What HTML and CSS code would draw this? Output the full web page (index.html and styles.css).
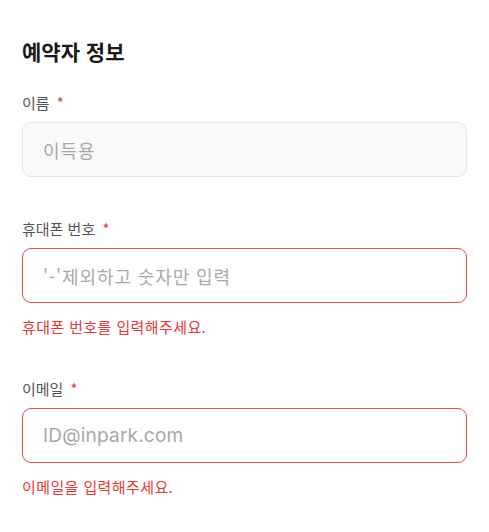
FILE: index.html
```html
<!DOCTYPE html>
<html lang="ko">
<head>
<meta charset="utf-8">
<link rel="stylesheet" href="styles.css">
</head>
<body>
<section class="form">
  <h2 class="title">예약자 정보</h2>
  <div class="field">
    <label class="label">이름 <span class="req">*</span></label>
    <div class="input disabled"><span class="ph">이득용</span></div>
  </div>
  <div class="field">
    <label class="label">휴대폰 번호 <span class="req">*</span></label>
    <div class="input error"><span class="ph">'-'제외하고 숫자만 입력</span></div>
    <p class="msg">휴대폰 번호를 입력해주세요.</p>
  </div>
  <div class="field">
    <label class="label">이메일 <span class="req">*</span></label>
    <div class="input error"><span class="ph latin">ID@inpark.com</span></div>
    <p class="msg">이메일을 입력해주세요.</p>
  </div>
</section>
</body>
</html>
```
FILE: styles.css
```css
* { box-sizing: border-box; }
html, body { margin: 0; padding: 0; background: #fff; }
body {
  font-family: "Noto Sans CJK KR", "Noto Sans", sans-serif;
  color: #222;
}
.form {
  padding: 37px 22px 0 22px;
  display: flex;
  flex-direction: column;
}
.title {
  margin: 0;
  font-size: 21px;
  line-height: 28px;
  font-weight: 700;
  color: #1a1a1a;
}
.field {
  display: flex;
  flex-direction: column;
  margin-top: 42px;
}
.title + .field { margin-top: 28px; }
.label {
  font-size: 15px;
  line-height: 20px;
  color: #555;
}
.req { color: #e53935; margin-left: 3px; }
.input {
  margin-top: 9px;
  height: 55px;
  width: 445px;
  border: 1px solid #e6e6e6;
  border-radius: 9px;
  display: flex;
  align-items: center;
  padding: 0 20px;
}
.input.disabled { background: #f9f9f9; }
.input.error { border: 1.5px solid #e84c4c; }
.ph {
  font-size: 18px;
  letter-spacing: 0.9px;
  color: #a8a8a8;
}
.ph.latin {
  font-family: "Inter", "Noto Sans CJK KR", sans-serif;
  font-size: 19px;
  letter-spacing: 0.2px;
}
.msg {
  margin: 14px 0 0 0;
  font-size: 15px;
  letter-spacing: 0.4px;
  line-height: 20px;
  color: #e53935;
}
```
